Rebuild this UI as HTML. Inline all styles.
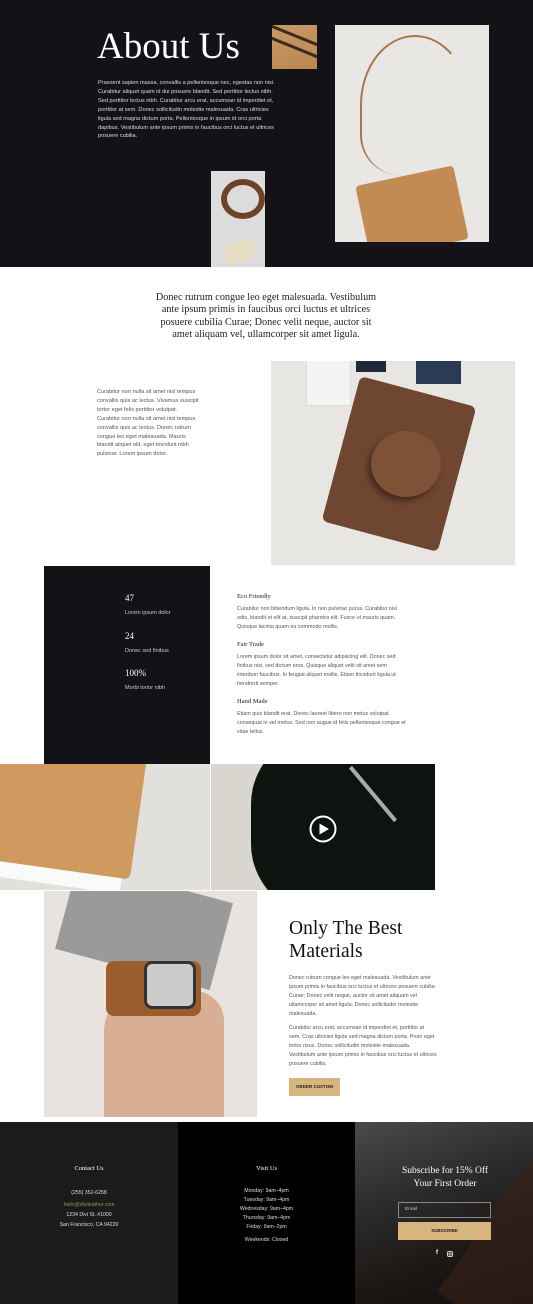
<!DOCTYPE html>
<html><head><meta charset="utf-8">
<style>
*{margin:0;padding:0;box-sizing:border-box}
body{width:533px;height:1304px;position:relative;background:#fff;font-family:"Liberation Sans",sans-serif;overflow:hidden}
.a{position:absolute}
.serif{font-family:"Liberation Serif",serif}
.p{font-size:5.4px;line-height:8.9px;color:#555}
</style></head><body>
<!-- hero -->
<div class="a" style="left:0;top:0;width:533px;height:267px;background:#131217"></div>
<div class="a serif" style="left:97px;top:25px;font-size:37px;color:#fff;line-height:44px">About Us</div>
<div class="a p" style="left:98px;top:79px;width:178px;color:#ddd;font-size:5.6px">Praesent sapien massa, convallis a pellentesque nec, egestas non nisi. Curabitur aliquet quam id dui posuere blandit. Sed porttitor lectus nibh. Sed porttitor lectus nibh. Curabitur arcu erat, accumsan id imperdiet et, porttitor at sem. Donec sollicitudin molestie malesuada. Cras ultricies ligula sed magna dictum porta. Pellentesque in ipsum id orci porta dapibus. Vestibulum ante ipsum primis in faucibus orci luctus et ultrices posuere cubilia.</div>
<div class="a" style="left:272px;top:25px;width:45px;height:44px;background:linear-gradient(160deg,#c99a66,#b98751);overflow:hidden">
 <div class="a" style="left:-10px;top:10px;width:70px;height:3px;background:#3b2a1d;transform:rotate(22deg)"></div>
 <div class="a" style="left:-10px;top:22px;width:70px;height:3px;background:#3b2a1d;transform:rotate(22deg)"></div>
</div>
<div class="a" style="left:335px;top:25px;width:154px;height:217px;background:#e9e7e4;overflow:hidden">
 <div class="a" style="left:25px;top:10px;width:110px;height:140px;border:2px solid #a8774a;border-radius:50% 50% 10px 40px;border-bottom:none;border-right-color:transparent"></div>
 <div class="a" style="left:27px;top:150px;width:100px;height:75px;background:#c28b53;border-radius:4px;transform:rotate(-12deg)"></div>
</div>
<div class="a" style="left:211px;top:171px;width:54px;height:96px;background:#dcdcdc;overflow:hidden">
 <div class="a" style="left:10px;top:8px;width:44px;height:40px;border:6px solid #6e4226;border-radius:50%"></div>
 <div class="a" style="left:14px;top:70px;width:30px;height:20px;background:#e6dcc4;transform:rotate(-20deg)"></div>
</div>
<!-- quote -->
<div class="a serif" style="left:155px;top:292px;width:222px;text-align:center;font-size:10.2px;line-height:12.4px;color:#222">Donec rutrum congue leo eget malesuada. Vestibulum ante ipsum primis in faucibus orci luctus et ultrices posuere cubilia Curae; Donec velit neque, auctor sit amet aliquam vel, ullamcorper sit amet ligula.</div>
<div class="a p" style="left:97px;top:388px;width:102px;font-size:5.6px">Curabitur non nulla sit amet nisl tempus convallis quis ac lectus. Vivamus suscipit tortor eget felis porttitor volutpat. Curabitur non nulla sit amet nisl tempus convallis quis ac lectus. Donec rutrum congue leo eget malesuada. Mauris blandit aliquet elit, eget tincidunt nibh pulvinar. Lorem ipsum dolor.</div>
<div class="a" style="left:271px;top:361px;width:244px;height:204px;background:#e8e6e3;overflow:hidden">
 <div class="a" style="left:35px;top:-5px;width:45px;height:50px;background:#f4f4f4;border:1px solid #ddd"></div>
 <div class="a" style="left:85px;top:-5px;width:30px;height:16px;background:#1e2a3a"></div>
 <div class="a" style="left:145px;top:-5px;width:45px;height:28px;background:#2b3b55"></div>
 <div class="a" style="left:68px;top:28px;width:120px;height:150px;background:#6f4630;border-radius:6px;transform:rotate(15deg)"></div>
 <div class="a" style="left:100px;top:70px;width:70px;height:66px;background:#7e5236;border-radius:50%;box-shadow:-3px 4px 6px rgba(0,0,0,.4)"></div>
</div>
<!-- dark stats -->
<div class="a" style="left:44px;top:566px;width:166px;height:198px;background:#131217"></div>
<div class="a serif" style="left:125px;top:593px;font-size:9px;color:#fff">47</div>
<div class="a" style="left:125px;top:610px;font-size:5.5px;color:#ccc">Lorem ipsum dolor</div>
<div class="a serif" style="left:125px;top:631px;font-size:9px;color:#fff">24</div>
<div class="a" style="left:125px;top:648px;font-size:5.5px;color:#ccc">Donec sed finibus</div>
<div class="a serif" style="left:125px;top:668px;font-size:9px;color:#fff">100%</div>
<div class="a" style="left:125px;top:685px;font-size:5.5px;color:#ccc">Morbi tortor nibh</div>
<div class="a serif" style="left:237px;top:593px;font-size:6.5px;color:#222">Eco Friendly</div>
<div class="a p" style="left:237px;top:605px;width:170px">Curabitur non bibendum ligula. In non pulvinar purus. Curabitur nisi odio, blandit et elit at, suscipit pharetra elit. Fusce ut mauris quam. Quisque lacinia quam eu commodo mollis.</div>
<div class="a serif" style="left:237px;top:641px;font-size:6.5px;color:#222">Fair Trade</div>
<div class="a p" style="left:237px;top:653px;width:170px">Lorem ipsum dolor sit amet, consectetur adipiscing elit. Donec sed finibus nisi, sed dictum eros. Quisque aliquet velit sit amet sem interdum faucibus. In feugiat aliquet mollis. Etiam tincidunt ligula ut hendrerit semper.</div>
<div class="a serif" style="left:237px;top:698px;font-size:6.5px;color:#222">Hand Made</div>
<div class="a p" style="left:237px;top:710px;width:170px">Etiam quis blandit erat. Donec laoreet libero non metus volutpat consequat in vel metus. Sed non augue id felis pellentesque congue et vitae tellus.</div>
<!-- images row -->
<div class="a" style="left:0;top:764px;width:210px;height:126px;background:#e2e0dd;overflow:hidden">
 <div class="a" style="left:-20px;top:-20px;width:150px;height:140px;background:#fafafa;border-radius:6px;transform:rotate(8deg)"></div>
 <div class="a" style="left:-20px;top:-30px;width:160px;height:135px;background:#cf9a5f;border-radius:6px;transform:rotate(8deg)"></div>
</div>
<div class="a" style="left:211px;top:764px;width:224px;height:126px;background:#d9d6d0;overflow:hidden">
 <div class="a" style="left:40px;top:-40px;width:230px;height:200px;background:#0d130e;border-radius:40% 0 0 40%"></div>
 <div class="a" style="left:160px;top:-5px;width:4px;height:70px;background:#aaa;transform:rotate(-40deg)"></div>
 <svg class="a" style="left:98px;top:51px" width="28" height="28" viewBox="0 0 28 28"><circle cx="14" cy="14" r="12.5" fill="none" stroke="#fff" stroke-width="2"/><path d="M10.5 8.5 L20 14 L10.5 19.5Z" fill="#fff"/></svg>
</div>
<!-- watch -->
<div class="a" style="left:44px;top:891px;width:213px;height:226px;background:#e8e3df;overflow:hidden">
 <div class="a" style="left:20px;top:-10px;width:160px;height:90px;background:#9a9a9a;transform:rotate(15deg)"></div>
 <div class="a" style="left:60px;top:100px;width:120px;height:140px;background:#d8ae94;border-radius:40px 30px 0 0"></div>
 <div class="a" style="left:62px;top:70px;width:95px;height:55px;background:#9a5e2e;border-radius:8px"></div>
 <div class="a" style="left:100px;top:70px;width:52px;height:48px;background:#ccc;border-radius:8px;border:3px solid #333"></div>
</div>
<div class="a serif" style="left:289px;top:918px;font-size:19.5px;line-height:22.5px;color:#111">Only The Best<br>Materials</div>
<div class="a p" style="left:289px;top:974px;width:148px">Donec rutrum congue leo eget malesuada. Vestibulum ante ipsum primis in faucibus orci luctus et ultrices posuere cubilia Curae; Donec velit neque, auctor sit amet aliquam vel ullamcorper sit amet ligula. Donec sollicitudin molestie malesuada.</div>
<div class="a p" style="left:289px;top:1024px;width:148px">Curabitur arcu erat, accumsan id imperdiet et, porttitor at sem. Cras ultricies ligula sed magna dictum porta. Proin eget tortor risus. Donec sollicitudin molestie malesuada. Vestibulum ante ipsum primis in faucibus orci luctus et ultrices posuere cubilia.</div>
<div class="a" style="left:289px;top:1078px;width:51px;height:18px;background:#d8b47f;font-size:4.5px;font-weight:bold;color:#222;text-align:center;line-height:18px">ORDER CUSTOM</div>
<!-- footer -->
<div class="a" style="left:0;top:1122px;width:178px;height:182px;background:#1b1b1b"></div>
<div class="a" style="left:178px;top:1122px;width:177px;height:182px;background:#000"></div>
<div class="a" style="left:355px;top:1122px;width:178px;height:182px;background:linear-gradient(160deg,#4a4a4a,#2a2a2a 40%,#1c1714 70%,#0f0d0c);overflow:hidden">
 <div class="a" style="left:120px;top:50px;width:90px;height:160px;background:#3a2218;transform:rotate(35deg);opacity:.6"></div>
</div>
<div class="a serif" style="left:0;top:1165px;width:178px;text-align:center;font-size:6.5px;color:#fff">Contact Us</div>
<div class="a" style="left:0;top:1187px;width:178px;text-align:center;font-size:5.2px;line-height:12px;color:#ddd">(255) 352-6258<br><span style="color:#a08a60">hello@divileather.com</span></div>
<div class="a" style="left:0;top:1211px;width:178px;text-align:center;font-size:5.2px;line-height:9.5px;color:#ddd">1234 Divi St. #1000<br>San Francisco, CA 94220</div>
<div class="a serif" style="left:178px;top:1165px;width:177px;text-align:center;font-size:6.5px;color:#fff">Visit Us</div>
<div class="a" style="left:178px;top:1187px;width:177px;text-align:center;font-size:5.2px;line-height:9px;color:#ddd">Monday: 9am–4pm<br>Tuesday: 9am–4pm<br>Wednesday: 9am–4pm<br>Thursday: 9am–4pm<br>Friday: 9am–2pm</div>
<div class="a" style="left:178px;top:1237px;width:177px;text-align:center;font-size:5.2px;color:#ddd">Weekends: Closed</div>
<div class="a serif" style="left:395px;top:1165px;width:100px;text-align:center;font-size:9.5px;line-height:12.5px;color:#fff">Subscribe for 15% Off Your First Order</div>
<div class="a" style="left:398px;top:1202px;width:93px;height:16px;border:1px solid #888;font-size:4.8px;color:#ccc;line-height:14px;padding-left:6px">Email</div>
<div class="a" style="left:398px;top:1222px;width:93px;height:18px;background:#d8b47f;font-size:4.5px;font-weight:bold;color:#222;text-align:center;line-height:18px">SUBSCRIBE</div>
<div class="a" style="left:436px;top:1250px;font-size:6px;color:#fff;font-weight:bold">f</div>
<svg class="a" style="left:447px;top:1251px" width="6" height="6" viewBox="0 0 6 6"><rect x=".5" y=".5" width="5" height="5" rx="1.3" fill="none" stroke="#fff" stroke-width=".8"/><circle cx="3" cy="3" r="1.2" fill="none" stroke="#fff" stroke-width=".7"/></svg>
</body></html>
